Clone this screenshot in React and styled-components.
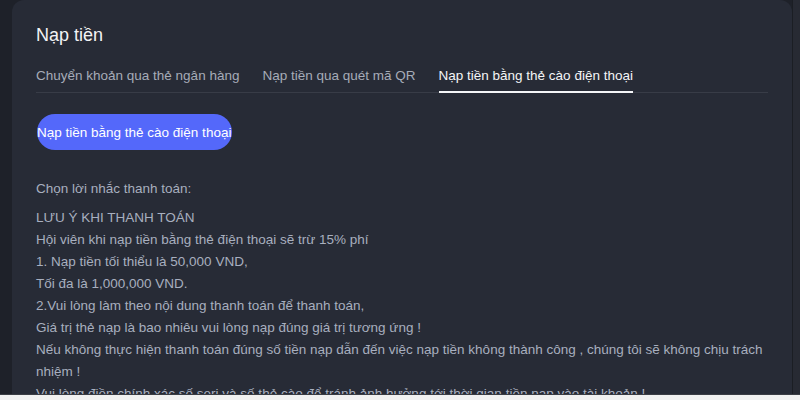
import styled, { createGlobalStyle } from 'styled-components';

const GlobalStyle = createGlobalStyle`
  html, body {
    margin: 0;
    padding: 0;
    background: #f1f1f1;
  }
  * { box-sizing: border-box; }
`;

const tabs = [
  'Chuyển khoản qua thẻ ngân hàng',
  'Nạp tiền qua quét mã QR',
  'Nạp tiền bằng thẻ cào điện thoại',
];

const notes = [
  'LƯU Ý KHI THANH TOÁN',
  'Hội viên khi nạp tiền bằng thẻ điện thoại sẽ trừ 15% phí',
  '1. Nạp tiền tối thiểu là 50,000 VND,',
  'Tối đa là 1,000,000 VND.',
  '2.Vui lòng làm theo nội dung thanh toán để thanh toán,',
  'Giá trị thẻ nạp là bao nhiêu vui lòng nạp đúng giá trị tương ứng !',
  'Nếu không thực hiện thanh toán đúng số tiền nạp dẫn đến việc nạp tiền không thành công , chúng tôi sẽ không chịu trách nhiệm !',
  'Vui lòng điền chính xác số seri và số thẻ cào để tránh ảnh hưởng tới thời gian tiền nạp vào tài khoản !',
];

const App = () => {
  return (
    <>
      <GlobalStyle />
      <Viewport>
        <Main>
          <Card>
            <Title>Nạp tiền</Title>
            <TabBar>
              {tabs.map((t, i) => (
                <Tab key={t} $active={i === 2}>{t}</Tab>
              ))}
            </TabBar>
            <PrimaryButton>Nạp tiền bằng thẻ cào điện thoại</PrimaryButton>
            <Prompt>Chọn lời nhắc thanh toán:</Prompt>
            <Notes>
              {notes.map((n) => (
                <p key={n}>{n}</p>
              ))}
            </Notes>
          </Card>
        </Main>
        <Scrollbar />
      </Viewport>
    </>
  );
};

export default App;

const Viewport = styled.div`
  display: flex;
  height: 395px;
  overflow: hidden;
  background: #1e2129;
  border-bottom: 1px solid #3a3d44;
  font-family: "Liberation Sans", Arial, sans-serif;
`;

const Main = styled.div`
  flex: 1;
  padding-left: 12px;
  min-width: 0;
`;

const Scrollbar = styled.div`
  width: 8px;
  background: #272a33;
  border-left: 1px solid #1b1e24;
`;

const Card = styled.div`
  background: #272b36;
  border-radius: 12px 12px 0 0;
  padding: 23px 24px 0 24px;
  min-height: 100%;
`;

const Title = styled.h1`
  margin: 0;
  font-size: 18px;
  font-weight: 400;
  color: #f2f3f5;
  line-height: 24px;
`;

const TabBar = styled.div`
  display: flex;
  gap: 23px;
  margin-top: 19px;
  border-bottom: 1px solid #383c47;
`;

const Tab = styled.div`
  font-size: 13.5px;
  line-height: 20px;
  padding-bottom: 5px;
  color: ${(p) => (p.$active ? '#f4f5f7' : '#a6acb8')};
  border-bottom: 2px solid ${(p) => (p.$active ? '#f4f5f7' : 'transparent')};
  margin-bottom: -1px;
  white-space: nowrap;
`;

const PrimaryButton = styled.button`
  display: block;
  margin-top: 21px;
  margin-left: 1px;
  width: 195px;
  height: 36px;
  padding: 0;
  border: none;
  border-radius: 18px;
  background: #5468fa;
  color: #ffffff;
  font-family: inherit;
  font-size: 13.5px;
  white-space: nowrap;
  text-align: left;
`;

const Prompt = styled.div`
  margin-top: 29px;
  font-size: 13.5px;
  line-height: 20px;
  color: #a8afbf;
`;

const Notes = styled.div`
  margin-top: 8px;
  font-size: 13.5px;
  line-height: 22px;
  color: #a8afbf;

  p {
    margin: 0;
  }
`;
